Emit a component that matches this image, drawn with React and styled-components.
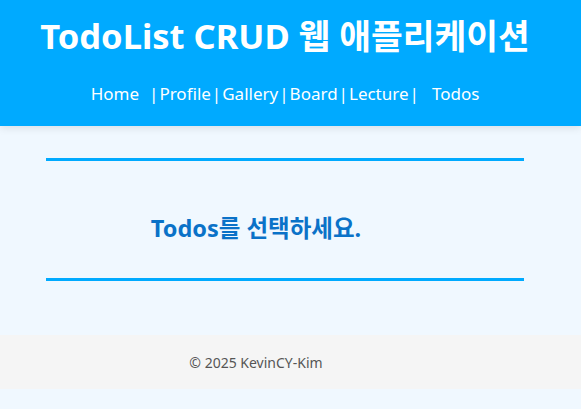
import React from "react";
import styled, { createGlobalStyle } from "styled-components";

const GlobalStyle = createGlobalStyle`
  body {
    margin: 0;
    background: #f0f8ff;
    font-family: "Noto Sans", "Noto Sans CJK KR", sans-serif;
  }
`;

const App = () => {
  return (
    <>
      <GlobalStyle />
      <Header>
        <Title>TodoList CRUD 웹 애플리케이션</Title>
        <Nav>
          <NavLink href="#">Home</NavLink>
          <Sep $wide>|</Sep>
          <NavLink href="#">Profile</NavLink>
          <Sep>|</Sep>
          <NavLink href="#">Gallery</NavLink>
          <Sep>|</Sep>
          <NavLink href="#">Board</NavLink>
          <Sep>|</Sep>
          <NavLink href="#">Lecture</NavLink>
          <Sep $after>|</Sep>
          <NavLink href="#">Todos</NavLink>
        </Nav>
      </Header>
      <Main>
        <Line />
        <Message>Todos를 선택하세요.</Message>
        <Line />
      </Main>
      <Footer>© 2025 KevinCY-Kim</Footer>
    </>
  );
};

export default App;

export const Header = styled.header`
  background: #00aaff;
  height: 126px;
  box-sizing: border-box;
  padding: 12px 11px 0 0;
  text-align: center;
  color: #ffffff;
  box-shadow: 0 2px 8px rgba(0, 0, 0, 0.1);
`;

export const Title = styled.h1`
  margin: 0;
  font-size: 34.5px;
  line-height: 48px;
  font-weight: bold;
`;

export const Nav = styled.nav`
  display: flex;
  justify-content: center;
  align-items: center;
  margin-top: 22px;
  font-size: 17px;
  line-height: 24px;
`;

export const NavLink = styled.a`
  color: #ffffff;
  text-decoration: none;
`;

export const Sep = styled.span`
  margin-left: ${(p) => (p.$wide ? "10px" : "1px")};
  margin-right: ${(p) => (p.$after ? "13px" : "1px")};
`;

export const Main = styled.main`
  margin: 32px 57px 0 46px;
  padding-bottom: 54px;
`;

export const Line = styled.div`
  height: 3px;
  background: #00aaff;
`;

export const Message = styled.h2`
  margin: 0;
  height: 117px;
  box-sizing: border-box;
  padding: 14px 58px 0 0;
  display: flex;
  align-items: center;
  justify-content: center;
  font-size: 23.5px;
  font-weight: bold;
  color: #0a72c8;
`;

export const Footer = styled.footer`
  height: 54px;
  display: flex;
  align-items: center;
  justify-content: center;
  padding-right: 69px;
  background: #f5f5f5;
  color: #555555;
  font-size: 14px;
`;
